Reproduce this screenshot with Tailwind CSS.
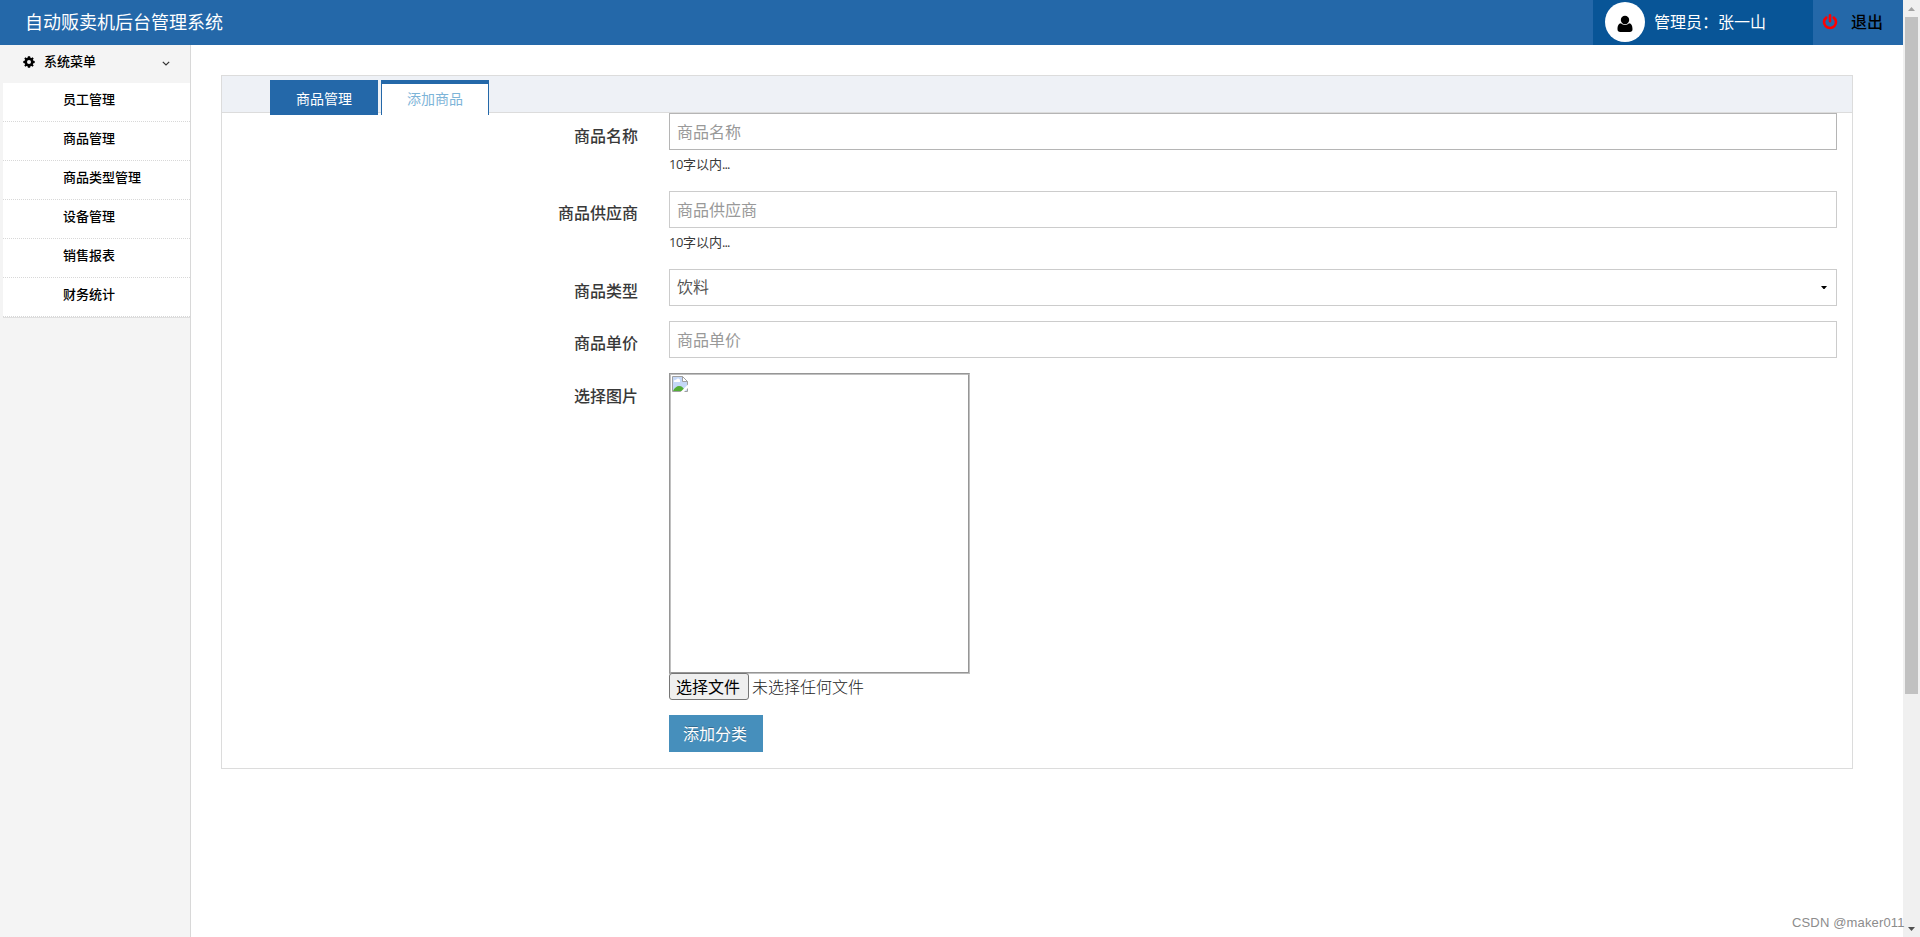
<!DOCTYPE html>
<html lang="zh-CN">
<head>
<meta charset="utf-8">
<title>自动贩卖机后台管理系统</title>
<script src="https://cdn.jsdelivr.net/npm/@tailwindcss/browser@4"></script>
</head>
<body class="relative flex h-[937px] w-[1920px] overflow-hidden bg-white font-['Open_Sans','Noto_Sans_CJK_SC',sans-serif] text-[#393939]">
<div class="flex w-[1903px] flex-col">
  <header class="flex h-[45px] shrink-0 bg-[#2468a9] text-white">
    <h1 class="flex-1 pl-[25px] text-[18px] leading-[44px]">自动贩卖机后台管理系统</h1>
    <div class="flex w-[220px] items-center bg-[#085597] pl-3">
      <span class="mb-px flex size-10 items-center justify-center rounded-full bg-white">
        <svg class="mt-[3px] h-[18px] w-4" viewBox="0 0 16 18" fill="#000"><circle cx="8" cy="5" r="4.2"/><path d="M4 8.2C1.300 8.500.5 11 .5 14.200.5 16 1.500 17 3.200 17h9.600c1.700 0 2.700-1 2.700-2.800 0-3.200-.8-5.700-3.500-6C10 10.500 6 10.500 4 8.200z"/></svg>
      </span>
      <span class="ml-[9px] text-[16px] leading-[45px]">管理员：张一山</span>
    </div>
    <div class="flex w-[90px] items-center pl-[9px]">
      <svg class="mb-px h-4 w-[16px]" viewBox="0 0 16 16" fill="none" stroke="#f00" stroke-width="2.600" stroke-linecap="round"><path d="M4.300 3.600a6 5.800 0 1 0 7.400 0M8 1.300v6"/></svg>
      <span class="ml-[13px] text-[16px] font-medium leading-[45px] text-black">退出</span>
    </div>
  </header>
  <div class="flex min-h-0 flex-1">
    <aside class="w-[191px] shrink-0 border-r border-[#d8d8d8] bg-[#f4f4f4] text-[13px] font-medium text-black">
      <div class="flex h-[38px] items-center pb-1 pl-[23px] pr-5">
        <svg class="size-[12px]" viewBox="0 0 12 12"><g fill="#000"><circle cx="6" cy="6" r="4.500"/><path d="M4.900.3h2.200l.4 2.500h-3zM4.900 11.700h2.200l.4-2.500h-3zM.3 4.900v2.200l2.500.4v-3zM11.700 4.900v2.200l-2.500.4v-3zM1.300 2.500l1.200-1.200 2 1.400-1.800 1.800zM10.700 2.500L9.500 1.300l-2 1.400 1.800 1.800zM1.300 9.500l1.200 1.200 2-1.400-1.800-1.800zM10.700 9.500l-1.200 1.200-2-1.400 1.800-1.800z"/></g><circle cx="6" cy="6" r="2" fill="#f4f4f4"/></svg>
        <span class="ml-[9px] flex-1">系统菜单</span>
        <svg class="mt-[3px] h-[5px] w-[8px]" viewBox="0 0 8 5" fill="none" stroke="#333" stroke-width="1.200"><path d="M.8.8L4 4 7.200.8"/></svg>
      </div>
      <ul class="ml-[3px] border-b border-[#dedede] bg-white leading-[33px]">
        <li class="h-[39px] border-b border-dotted border-[#d8d8d8] pl-[60px]">员工管理</li>
        <li class="h-[39px] border-b border-dotted border-[#d8d8d8] pl-[60px]">商品管理</li>
        <li class="h-[39px] border-b border-dotted border-[#d8d8d8] pl-[60px]">商品类型管理</li>
        <li class="h-[39px] border-b border-dotted border-[#d8d8d8] pl-[60px]">设备管理</li>
        <li class="h-[39px] border-b border-dotted border-[#d8d8d8] pl-[60px]">销售报表</li>
        <li class="h-[39px] border-b border-dotted border-[#d8d8d8] pl-[60px]">财务统计</li>
      </ul>
    </aside>
    <main class="flex-1 pl-[30px] pt-[30px]">
      <section class="h-[694px] w-[1632px] border border-[#dcdcdc]">
        <div class="flex h-[37px] gap-[3px] border-b border-[#dcdcdc] bg-[#eef1f6] pl-12 pt-1 text-center text-[14px]">
          <div class="h-[35px] w-[108px] bg-[#2468a9] leading-[38px] text-white">商品管理</div>
          <div class="h-[35px] w-[108px] border-x border-t-4 border-[#2468a9] bg-white leading-[30px] text-[#7db4d8]">添加商品</div>
        </div>
        <form class="grid grid-cols-[416px_1168px] gap-x-[31px] text-[16px]">
          <label class="h-[78px] text-right font-medium leading-[46px]">商品名称</label>
          <div class="h-[78px]">
            <div class="h-[37px] border border-[#b5b5b5] px-[7px] leading-[36px] text-[#999]">商品名称</div>
            <p class="text-[13px] leading-[28px]"><span class="tracking-[-0.5px]">10</span>字以内<span class="tracking-[-0.8px]">...</span></p>
          </div>
          <label class="h-[78px] text-right font-medium leading-[45px]">商品供应商</label>
          <div class="h-[78px]">
            <div class="h-[37px] border border-[#ccc] px-[7px] leading-[36px] text-[#999]">商品供应商</div>
            <p class="text-[13px] leading-[28px]"><span class="tracking-[-0.5px]">10</span>字以内<span class="tracking-[-0.8px]">...</span></p>
          </div>
          <label class="h-[52px] text-right font-medium leading-[45px]">商品类型</label>
          <div class="h-[52px]">
            <div class="flex h-[37px] items-center justify-between border border-[#ccc] pl-[7px] pr-[9px] leading-[37px] text-[#555]">饮料<svg class="h-[3px] w-[6px]" viewBox="0 0 6 3"><path d="M0 0h6L3.500 3h-1z" fill="#000"/></svg></div>
          </div>
          <label class="h-[52px] text-right font-medium leading-[45px]">商品单价</label>
          <div class="h-[52px]">
            <div class="h-[37px] border border-[#ccc] px-[7px] leading-[36px] text-[#999]">商品单价</div>
          </div>
          <label class="text-right font-medium leading-[46px]">选择图片</label>
          <div>
            <div class="size-[301px] border border-b-[#c0c0c0] border-l-[#969696] border-r-[#c0c0c0] border-t-[#969696]">
              <div class="size-full border border-b-[#969696] border-l-[#c0c0c0] border-r-[#969696] border-t-[#c0c0c0] p-px">
                <svg class="size-4" viewBox="0 0 16 16"><path d="M.5.500h10l5 5v10H.500z" fill="#c5d8f7" stroke="#a0a0a0"/><path d="M2 6a1.500 1.500 0 0 1 2-2 2 2 0 0 1 4 1v1z" fill="#fff"/><path d="M1 15c1-3 4-5 6-5 3 0 5 2 6 5z" fill="#54ae36"/><path d="M10.500.500v5h5z" fill="#fff" stroke="#a0a0a0"/><path d="M16 8.500L8.500 16h3.500l4-4z" fill="#fff"/></svg>
              </div>
            </div>
            <div class="-mt-px flex h-[27px] items-center">
              <span class="h-[27px] w-[80px] rounded-[3px] border border-[#767676] bg-[#efefef] pl-[6px] leading-[27px] text-black">选择文件</span>
              <span class="ml-[3px] font-light leading-[28px] text-[#222]">未选择任何文件</span>
            </div>
            <div class="mt-[15px] h-[37px] w-[94px] bg-[#468fbc] pl-[14px] leading-[38px] text-white text-shadow-[0_-1px_0_rgba(0,0,0,0.25)]">添加分类</div>
          </div>
        </form>
      </section>
    </main>
  </div>
</div>
<div class="flex w-[17px] flex-col items-center bg-[#f0f0f0]">
  <div class="flex h-[17px] items-center"><svg class="h-1 w-[7px]" viewBox="0 0 7 4"><path d="M0 4l3.500-4L7 4z" fill="#a3a3a3"/></svg></div>
  <div class="h-[677px] w-[13px] bg-[#c1c1c1]"></div>
  <div class="mt-auto flex h-[17px] items-center"><svg class="h-1 w-[7px]" viewBox="0 0 7 4"><path d="M0 0l3.500 4L7 0z" fill="#505050"/></svg></div>
</div>
<div class="absolute left-[1792px] top-[913px] whitespace-nowrap font-['Liberation_Sans',sans-serif] text-[13px] leading-5 tracking-[0.15px] text-[#8c8c8c]">CSDN @maker011</div>
</body>
</html>
